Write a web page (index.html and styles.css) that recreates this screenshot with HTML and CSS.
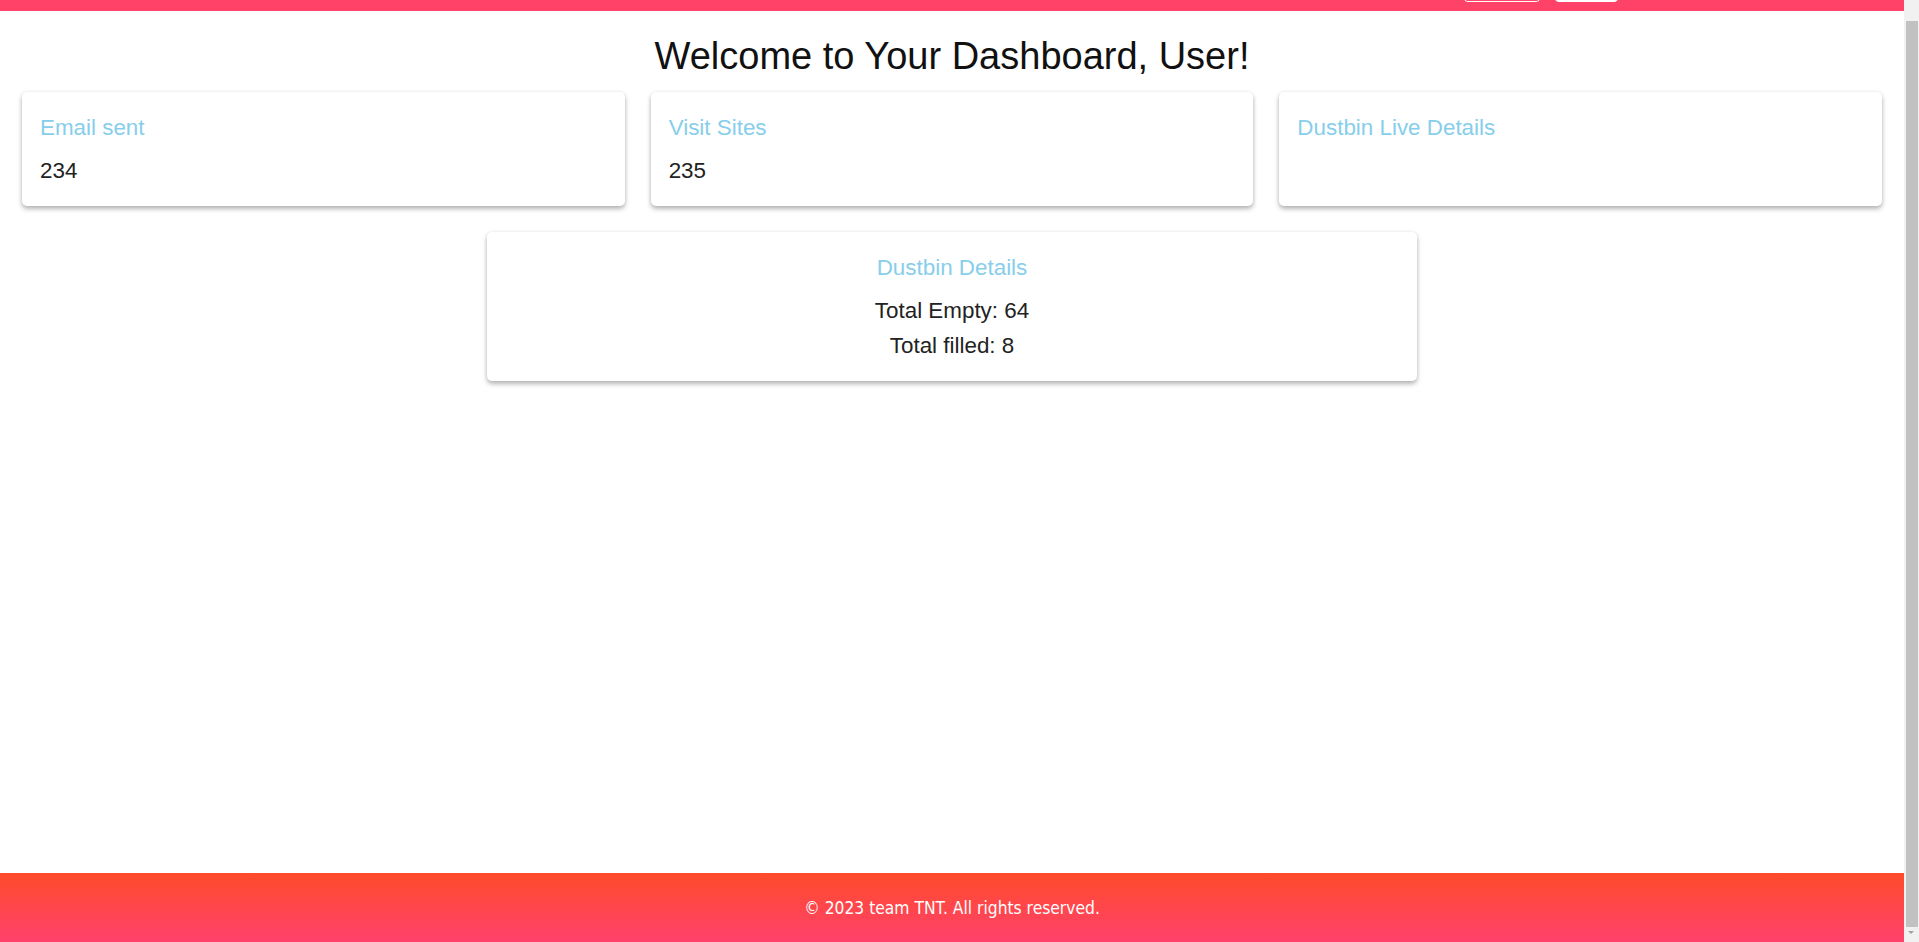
FILE: index.html
```html
<!DOCTYPE html>
<html lang="en">
<head>
<meta charset="utf-8">
<title>Dashboard</title>
<link rel="stylesheet" href="styles.css">
</head>
<body>
<header class="topbar">
  <div class="nav-actions">
    <button class="btn btn-outline" aria-label="Profile"></button>
    <button class="btn btn-solid" aria-label="Logout"></button>
  </div>
</header>
<main class="dashboard">
  <h1 class="welcome">Welcome to Your Dashboard, User!</h1>
  <section class="stats-row">
    <div class="card">
      <h3 class="card-title">Email sent</h3>
      <p class="card-value">234</p>
    </div>
    <div class="card">
      <h3 class="card-title">Visit Sites</h3>
      <p class="card-value">235</p>
    </div>
    <div class="card">
      <h3 class="card-title">Dustbin Live Details</h3>
    </div>
  </section>
  <section class="details-row">
    <div class="card card-center">
      <h3 class="card-title">Dustbin Details</h3>
      <p class="card-value">Total Empty: 64</p>
      <p class="card-value">Total filled: 8</p>
    </div>
  </section>
</main>
<footer class="site-footer">
  <p class="footer-text">© 2023 team TNT. All rights reserved.</p>
</footer>
<div class="fake-scrollbar" aria-hidden="true">
  <div class="scroll-thumb"></div>
  <div class="scroll-arrow"></div>
</div>
</body>
</html>
```
FILE: styles.css
```css
html {
  overflow: hidden;
}

body {
  margin: 0;
  padding-right: 15px;
  min-height: 942px;
  box-sizing: border-box;
  display: flex;
  flex-direction: column;
  background: #ffffff;
  font-family: "Liberation Sans", Arial, sans-serif;
  color: #111111;
}

.topbar {
  height: 11px;
  box-sizing: border-box;
  background: #ff4368;
  overflow: hidden;
  display: flex;
  justify-content: flex-end;
  align-items: flex-end;
  padding: 0 285px 9px 0;
}

.nav-actions {
  display: flex;
  align-items: flex-end;
  gap: 13px;
}

.btn {
  height: 30px;
  padding: 0;
  border: 1px solid #ffffff;
  border-radius: 5px;
}

.btn-outline {
  width: 78px;
  background: transparent;
}

.btn-solid {
  width: 65px;
  background: #ffffff;
}

.dashboard {
  flex: 1;
}

.welcome {
  margin: 24px 0 14px;
  text-align: center;
  font-size: 38px;
  font-weight: normal;
  line-height: 43px;
  color: #111111;
}

.stats-row {
  display: flex;
  gap: 26px;
  padding: 0 22px;
}

.card {
  flex: 1;
  background: #ffffff;
  border-radius: 5px;
  box-shadow: 0 3px 5px rgba(0, 0, 0, 0.28), 0 0 4px rgba(0, 0, 0, 0.07);
  padding: 23px 18px 22px;
}

.card-title {
  margin: 0 0 17px;
  font-size: 22.4px;
  line-height: 26px;
  font-weight: normal;
  color: #87ceeb;
}

.card-value {
  margin: 0;
  font-size: 22.4px;
  line-height: 26px;
  color: #222222;
}

.card-value + .card-value {
  margin-top: 9px;
}

.details-row {
  display: flex;
  justify-content: center;
  padding: 26px 22px 0;
}

.card-center {
  flex: 0 0 50%;
  box-sizing: border-box;
  text-align: center;
}

.site-footer {
  height: 69px;
  display: flex;
  align-items: center;
  justify-content: center;
  background: linear-gradient(to bottom, #ff4b2b, #ff416c);
}

.footer-text {
  margin: 0;
  font-family: "DejaVu Sans Condensed", "DejaVu Sans", sans-serif;
  font-size: 17.3px;
  color: #ffffff;
}

.fake-scrollbar {
  position: fixed;
  top: 0;
  right: 0;
  width: 15px;
  height: 100%;
  background: #f1f1f1;
}

.scroll-thumb {
  position: absolute;
  top: 21px;
  bottom: 15px;
  left: 2px;
  right: 1px;
  background: #c1c1c1;
}

.scroll-arrow {
  position: absolute;
  bottom: 8px;
  left: 4px;
  width: 0;
  height: 0;
  border-left: 3.5px solid transparent;
  border-right: 3.5px solid transparent;
  border-top: 3.5px solid #a3a3a3;
}
```
